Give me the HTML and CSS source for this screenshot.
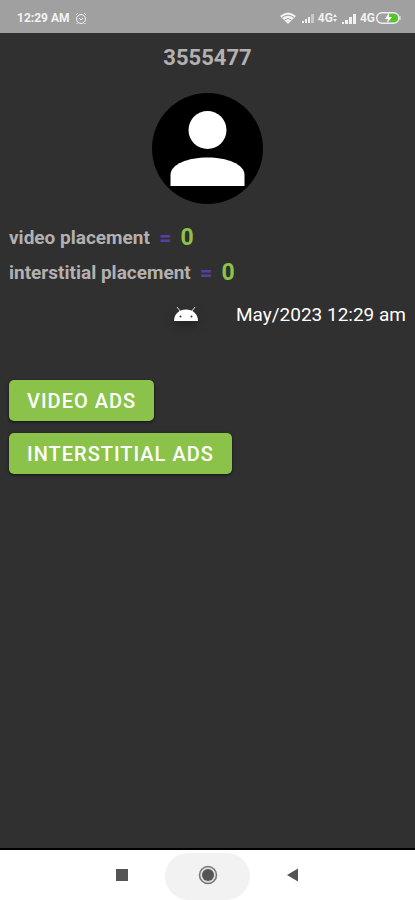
FILE: index.html
```
<!DOCTYPE html>
<html lang="en">
<head>
<meta charset="utf-8">
<meta name="viewport" content="width=device-width, initial-scale=1">
<title>Ads</title>
<link rel="stylesheet" href="styles.css">
</head>
<body>
<header class="status">
  <span>12:29 AM</span>
  <svg class="alarm" width="12" height="13" viewBox="0 0 12 13" fill="none" stroke="currentColor"><circle cx="6" cy="7" r="4.5"/><path d="M1 3 3 1M11 3 9 1M4 6l2 2 2-2M2.5 11l-1 1M9.500 11l1 1"/></svg>
  <div class="signals">
    <svg width="17" height="12" viewBox="0 0 17 12"><path fill="currentColor" d="M0 4Q8 -3 16 4L8 12Z"/><path d="M2 5.500Q8 1 14 5.500M4.500 8Q8 5 11.500 8" fill="none" stroke="#a0a0a0"/></svg>
    <svg class="bars" width="13" height="10" viewBox="0 0 13 10" fill="currentColor"><path d="M0 8h2v2H0zM3 6h2v4H3zM6 4h2v6H6z"/><path opacity=".5" d="M9 1h3v9H9z"/></svg>
    <span>4G</span>
    <svg class="arrows" width="4" height="10" viewBox="0 0 4 10" fill="currentColor"><path d="M0 4 2 1l2 3zM0 6l2 3 2-3z"/></svg>
    <svg class="bars" width="15" height="11" viewBox="0 0 15 11" fill="currentColor"><path d="M0 9h2v2H0zM3 7h3v4H3zM7 4h3v7H7zM11 1h3v10h-3z"/></svg>
    <span>4G</span>
    <svg class="battery" width="25" height="12" viewBox="0 0 25 12"><rect x=".75" y=".75" width="22" height="10.500" rx="5" fill="#a0a0a0" stroke="#eee" stroke-width="1.500"/><path d="M14 2h4q4 0 4 4t-4 4h-4z" fill="#55c722"/><path d="m13 1-4 6h3l-1 4 5-6h-3z" fill="#fff"/><path d="M24 4v4" stroke="#eee"/></svg>
  </div>
</header>
<main class="content">
  <h1 class="title">3555477</h1>
  <svg class="avatar" viewBox="0 0 111 111" role="img" aria-label="Profile"><circle cx="55.500" cy="55.500" r="55.500" fill="#000"/><circle cx="55.500" cy="37" r="19" fill="#fff"/><path fill="#fff" d="M18.500 93V82C18.500 71 36 64.500 55.500 64.500S92.500 71 92.500 82V93Z"/></svg>
  <p class="stat">video placement <span class="equals">=</span><span class="count">0</span></p>
  <p class="stat">interstitial placement <span class="equals">=</span><span class="count">0</span></p>
  <div class="date">
    <svg class="robot" width="26" height="16" viewBox="0 0 26 16"><path d="M4 1 7 5M22 1 19 5" stroke="#ddd" stroke-width="1"/><path d="M1 15C1 8 6 3.500 13 3.500S25 8 25 15Z" fill="#fff"/><circle cx="7.500" cy="10.500" r="1" fill="#333"/><circle cx="18.500" cy="10.500" r="1" fill="#333"/></svg>
    <time>May/2023 12:29 am</time>
  </div>
  <div class="actions">
    <button class="ad" type="button">VIDEO ADS</button>
    <button class="ad" type="button">INTERSTITIAL ADS</button>
  </div>
</main>
<nav class="navbar">
  <button class="key" type="button" aria-label="Recent apps"><svg width="20" height="20" viewBox="0 0 20 20"><path d="M3 4h12v12H3z" fill="#555"/></svg></button>
  <button class="key home" type="button" aria-label="Home"><svg width="20" height="20" viewBox="0 0 20 20"><circle cx="10" cy="10" r="8.500" fill="#ddd" stroke="#777" stroke-width="1.500"/><circle cx="10" cy="10" r="6" fill="#555"/></svg></button>
  <button class="key" type="button" aria-label="Back"><svg width="20" height="20" viewBox="0 0 20 20"><path d="M4 10 15 3.500v13z" fill="#555"/></svg></button>
</nav>
</body>
</html>
```
FILE: styles.css
```
* { box-sizing: border-box; }
body {
  margin: 0;
  min-height: 100vh;
  display: flex;
  flex-direction: column;
  background: #303030;
  color: #fff;
  font-family: Roboto, sans-serif;
}
.status {
  display: flex;
  align-items: center;
  height: 33px;
  padding: 3px 14px 0 17px;
  background: #a0a0a0;
  color: #f2f2f2;
  font-size: 12px;
  font-weight: 700;
}
.alarm { margin-left: 6px; }
.signals { display: flex; align-items: center; margin-left: auto; }
.bars { margin: 0 3px 0 5px; }
.battery { margin-left: 1px; }
.content {
  flex: 1;
  display: flex;
  flex-direction: column;
  padding: 11px 9px;
  border-bottom: 2px solid #000;
}
.title {
  margin: 0;
  text-align: center;
  color: #b3b0b1;
  font-size: 22px;
  line-height: 28px;
  font-weight: 700;
}
.avatar { width: 111px; margin: 21px auto 16px; }
.stat {
  display: flex;
  align-items: center;
  margin: 0;
  height: 35px;
  color: #b3b0b1;
  font-size: 19px;
  font-weight: 700;
}
.equals { margin: 0 9px; color: #5a3da0; font-size: 22px; }
.count { color: #8bc34a; font-size: 23px; }
.date {
  display: flex;
  align-items: center;
  justify-content: flex-end;
  gap: 37px;
  height: 48px;
  font-size: 19px;
}
.robot { filter: drop-shadow(0 4px 4px #222); }
.actions {
  display: flex;
  flex-direction: column;
  align-items: flex-start;
  gap: 12px;
  margin-top: 42px;
}
.ad {
  height: 41px;
  padding: 0 18px;
  border: 0;
  border-radius: 5px;
  background: #8bc34a;
  box-shadow: 0 1px 3px #111;
  color: #fff;
  font-family: inherit;
  font-size: 20px;
  font-weight: 500;
  letter-spacing: 1px;
}
.navbar {
  display: flex;
  justify-content: center;
  height: 50px;
  background: #fff;
}
.key {
  display: flex;
  align-items: center;
  justify-content: center;
  width: 85px;
  padding: 0;
  border: 0;
  background: none;
}
.home {
  margin: 3px 0 0;
  padding-bottom: 3px;
  border-radius: 24px;
  background: #f2f2f2;
}
```
